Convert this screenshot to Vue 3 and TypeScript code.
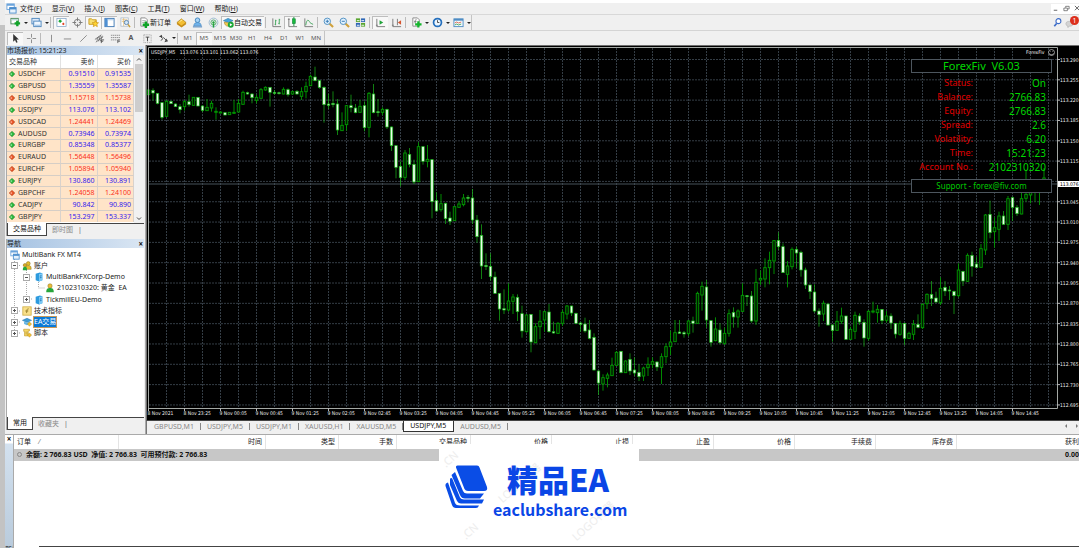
<script setup lang="ts">
type Candle = [high: number, top: number, bottom: number, low: number, falling: 0 | 1]

interface Tool {
  icon?: string
  label: string
  text?: string
  pressed?: boolean
  caret?: boolean
  sep?: boolean
}

const icons: Record<string, string> = {
  app: '<rect x="1" y="1" width="8" height="6" fill="#fff" stroke="#6ba4dc"/><rect x="1" y="1" width="8" height="2" fill="#6ba4dc"/><rect x="4" y="5" width="7" height="6" fill="#e6f2fc" stroke="#4a8ccc"/><rect x="4" y="5" width="7" height="2" fill="#4a8ccc"/>',
  newChart: '<rect x="1" y="1.5" width="8" height="6" fill="#fff" stroke="#4b8a5a"/><path d="M2 3h6" stroke="#9cc"/><path d="M5 7h6M8 4v6" stroke="#10a428" stroke-width="2.6"/>',
  profiles: '<rect x="1" y="1.5" width="8" height="6" fill="#dceafa" stroke="#4d86bd"/><rect x="3" y="4.500" width="8" height="6" fill="#eef6ff" stroke="#4d86bd"/><path d="M4 9h6" stroke="#8ab4dc"/>',
  market: '<rect x="1" y="1.500" width="10" height="9" fill="#fff" stroke="#7fa3c6" stroke-width=".8"/><path d="M3 4.500l1.500-1.500L6 4.500 4.500 6z" fill="#12a32c" stroke="#12a32c"/><path d="M6.500 7.500L8 6l1.500 1.500L8 9z" fill="#e04020"/>',
  target: '<circle cx="6" cy="6" r="3.500" fill="none" stroke="#777"/><path d="M6 0.500v4M6 7.500v4M0.500 6h4M7.500 6h4" stroke="#777"/>',
  navigator: '<path d="M1 2h3l1 1h4v5H1z" fill="#f8df70" stroke="#c99b22"/><path d="M8 4l1 2 2.500.3-1.800 1.700.5 2.500L8 9.300 5.800 10.500l.5-2.500-1.800-1.700L7 6z" fill="#ffd330" stroke="#c99115" stroke-width=".7"/>',
  terminal: '<rect x="1" y="1.500" width="10" height="9" fill="#fff" stroke="#3f78b4"/><rect x="1" y="1.500" width="3" height="9" fill="#4e8fd2"/><path d="M4 3h7" stroke="#9cc3e8"/>',
  tester: '<rect x="1" y="1" width="8" height="9" fill="#fff" stroke="#a3b4c6" stroke-width=".8"/><path d="M2 3h6M2 5h6M4 1v9" stroke="#e0b060" stroke-width=".7"/><circle cx="7" cy="6" r="2.300" fill="#cfe6fa" stroke="#5c82a8"/><path d="M8.700 8l2.300 3" stroke="#c69c36" stroke-width="1.500"/>',
  order: '<path d="M2 1h5l2 2v7H2z" fill="#fff" stroke="#888"/><path d="M3.500 4h4M3.500 6h3" stroke="#888" stroke-width=".7"/><path d="M4 8.500h7M7.500 5v7" stroke="#10a428" stroke-width="2.600"/>',
  editor: '<path d="M1 6l5-4 5 4-5 4z" fill="#f3bf35" stroke="#a77a12" stroke-width=".7"/><path d="M1 6v2l5 3.500L11 8V6L6 9.500z" fill="#c98e17"/><path d="M4 5l3-2" stroke="#fff0a0"/>',
  community: '<circle cx="6" cy="3.500" r="2.500" fill="#a5d3f6" stroke="#3e83bd"/><path d="M2 10c0-3 1.500-4 4-4s4 1 4 4z" fill="#6fb2ea" stroke="#3e83bd" stroke-width=".7"/><path d="M1 10.500h10" stroke="#7da5ce" stroke-width="2"/>',
  signals: '<circle cx="6" cy="6" r="4.800" fill="none" stroke="#9bb9d0"/><circle cx="6" cy="6" r="2.800" fill="none" stroke="#4caa66"/><circle cx="6" cy="6" r="1.300" fill="#22a43b"/><path d="M6 7v4.500" stroke="#22a43b" stroke-width="1.500"/>',
  auto: '<path d="M0.500 4L5.500 1.500 11 4 6 6z" fill="#45a4db" stroke="#2778ac" stroke-width=".7"/><path d="M1.500 5.500c0 6 8 6 8 0l-3.500 1z" fill="#f1cb53" stroke="#a8862d" stroke-width=".7"/><circle cx="8.500" cy="8.500" r="3.200" fill="#18a534"/><path d="M7.500 6.800v3.400L10.300 8.500z" fill="#fff"/>',
  bars: '<path d="M2 1.500v9h9" fill="none" stroke="#777"/><path d="M5 3v6M4 8h1M5 4h1M9 2v6M8 7h1M9 3h1" stroke="#3fa45a"/>',
  candles: '<path d="M2 1.500v9h9M1 2.500h2" fill="none" stroke="#777"/><path d="M7.500 0v10" stroke="#14963a"/><rect x="6" y="2" width="3" height="5" fill="#17bd3c" stroke="#14853a" stroke-width=".7"/>',
  line: '<path d="M2 1.500v9h9" fill="none" stroke="#777"/><path d="M3 9c1-7 3-6 4-4s2 2 4 3" fill="none" stroke="#3fa45a"/>',
  zoomIn: '<path d="M7 7l4 4" stroke="#d0a13a" stroke-width="2.200"/><circle cx="4.700" cy="4.700" r="3.500" fill="#dff0fd" stroke="#4d8dc0"/><path d="M3 4.700h3.400M4.700 3v3.400" stroke="#3579b2"/>',
  zoomOut: '<path d="M7 7l4 4" stroke="#d0a13a" stroke-width="2.200"/><circle cx="4.700" cy="4.700" r="3.500" fill="#dff0fd" stroke="#4d8dc0"/><path d="M3 4.700h3.400" stroke="#3579b2"/>',
  tile: '<rect x="1" y="1.500" width="4.500" height="4" fill="#58a52f"/><rect x="6.500" y="1.500" width="4.500" height="4" fill="#2e67b6"/><rect x="1" y="6.500" width="4.500" height="4" fill="#2e67b6"/><rect x="6.500" y="6.500" width="4.500" height="4" fill="#58a52f"/><path d="M2 4h3M7 4h3M2 9h3M7 9h3" stroke="#fff"/>',
  scroll: '<path d="M2 2v8.500h9M1 9h2" fill="none" stroke="#777"/><path d="M5 3.500v5L9 6z" fill="#22a43b"/>',
  shift: '<path d="M2 2v8.500h9M1 9h2M7 2v7" fill="none" stroke="#777"/><path d="M11 3.500v5L7.500 6z" fill="#d6532c"/>',
  indicators: '<path d="M2 1h5l2 2v7H2z" fill="#fff" stroke="#888"/><path d="M6 3c-1.500-.5-1.500 1-1.500 4M3.500 5h2.500" fill="none" stroke="#777"/><path d="M4.500 8h7M8 4.500v7" stroke="#13b52c" stroke-width="2.400"/>',
  clock: '<circle cx="6" cy="6" r="4.300" fill="#eef7ff" stroke="#2670bd" stroke-width="1.900"/><path d="M6 3.500V6h2" fill="none" stroke="#444"/>',
  template: '<rect x="1" y="2" width="10" height="8.500" fill="#f3faff" stroke="#4e8cc4"/><rect x="1" y="2" width="10" height="2" fill="#4e8cc4"/><path d="M2 6.500l2-1 2 1 3-1" stroke="#d9664b" fill="none"/><path d="M2 8.700l2-1 2 1 3-1" stroke="#46a35b" fill="none"/>',
  cursor: '<path d="M3.500 1v8.500l2-2 1.300 3.200 1.500-.6L7 7h2.700z" fill="#333"/>',
  cross: '<path d="M6 1v4M6 7v4M1 6h4M7 6h4" stroke="#888"/>',
  vline: '<path d="M6 2v8" stroke="#888"/>',
  hline: '<path d="M2 6.500h8" stroke="#888"/>',
  trend: '<path d="M2.500 9.500l7-7" stroke="#888"/>',
  channel: '<path d="M1 7l7-5M2 10l8-6M3 8l2-4M5 9l2-6M7 9l2-6" stroke="#555" stroke-width=".8"/><path d="M8 11V7.500h3M8 9h2" stroke="#333" fill="none" stroke-width=".8"/>',
  fibo: '<path d="M1 2.500h10M1 5h10M1 7.500h7" stroke="#888" stroke-dasharray="1.500 .6"/><path d="M8.500 11V7.500H11M8.500 9H11" stroke="#444" fill="none" stroke-width=".8"/>',
  label: '<rect x="2" y="2" width="8" height="8.500" fill="none" stroke="#999" stroke-dasharray="1 1"/><path d="M4 4.500h4M6 4.500V9" stroke="#444"/>',
  arrows: '<path d="M1 4l3-2 1 3zM7 10l4-1-2-3z" fill="#444"/><path d="M3 4l2 2 1-1 3 3M3 8l2-1" stroke="#444" fill="none"/>',
  accounts: '<circle cx="7.500" cy="3" r="2.300" fill="#e5bd2f" stroke="#8f7016" stroke-width=".6"/><path d="M4 10c0-4 1-4.500 3.500-4.500S11 6 11 10z" fill="#e5bd2f" stroke="#8f7016" stroke-width=".6"/><circle cx="3.500" cy="5" r="2" fill="#d9aa25" stroke="#8f7016" stroke-width=".6"/><path d="M1 11c0-3 .5-4 2.500-4S6 8 6 11z" fill="#27a83c"/>',
  server: '<path d="M2 2l5-1.500 3 1V10L6 11.500 2 10z" fill="#2c9ade"/><path d="M6 2.500l4-1V10l-4 1.500z" fill="#7cc9f5"/><path d="M7 5l2-.5M7 7l2-.5" stroke="#1b6fae"/>',
  user: '<circle cx="6" cy="3.500" r="2.600" fill="#e9bd39" stroke="#8a7120" stroke-width=".6"/><path d="M1.500 11c0-4 1.500-5 4.500-5s4.500 1 4.500 5z" fill="#28a63c"/>',
  func: '<rect x="1" y="1" width="10" height="10" fill="#f9e08a" stroke="#cfae48"/><path d="M8 3.500c-2-.7-2 1-2.500 5M4 6h3.500" stroke="#8d741f" fill="none"/>',
  expert: '<path d="M0.500 4L6 1.500 11.500 4 6 6.500z" fill="#3d9cd6" stroke="#2473a8" stroke-width=".6"/><path d="M2.500 5.500v3L6 10l3.500-1.500v-3L6 7z" fill="#63b5e4"/><path d="M9 6l2.500 2.500L9 11 6.500 8.500z" fill="#f3c02f" stroke="#a87d12" stroke-width=".5"/>',
  script: '<path d="M2 1.500h7v2H7.500v6H3V4H2z" fill="#f6d766" stroke="#bd962a" stroke-width=".7"/><path d="M4 5h3M4 7h3" stroke="#a9872a" stroke-width=".7"/><path d="M9 6l2.500 2.500L9 11 6.500 8.500z" fill="#f3c02f" stroke="#a87d12" stroke-width=".5"/>',
  search: '<circle cx="7" cy="4.500" r="2.700" fill="#fff" stroke="#3d6cc8" stroke-width="1.200"/><path d="M5 7L2.500 10" stroke="#3d6cc8" stroke-width="1.800"/>',
  alert: '<path d="M1 7c0-3 8-3 8 0s-3 3-4 3l-2 1.500V10C2 9.500 1 9 1 7z" fill="#d4d4d4" stroke="#aaa" stroke-width=".6"/>',
}

const menus: [string, string][] = [['文件', 'F'], ['显示', 'V'], ['插入', 'I'], ['图表', 'C'], ['工具', 'T'], ['窗口', 'W'], ['帮助', 'H']]

const mainTools: Tool[] = [
  { icon: 'newChart', label: '新图表', caret: true },
  { icon: 'profiles', label: '配置', caret: true },
  { sep: true, label: '' },
  { icon: 'market', label: '市场报价', pressed: true },
  { icon: 'target', label: '数据窗口' },
  { icon: 'navigator', label: '导航', pressed: true },
  { icon: 'terminal', label: '终端', pressed: true },
  { icon: 'tester', label: '测试' },
  { sep: true, label: '' },
  { icon: 'order', label: '新订单', text: '新订单' },
  { icon: 'editor', label: '编辑器' },
  { icon: 'community', label: '社区' },
  { icon: 'signals', label: '信号' },
  { icon: 'auto', label: '自动交易', text: '自动交易', pressed: true },
  { sep: true, label: '' },
  { icon: 'bars', label: '柱状图' },
  { icon: 'candles', label: '阴阳烛', pressed: true },
  { icon: 'line', label: '折线图' },
  { sep: true, label: '' },
  { icon: 'zoomIn', label: '放大' },
  { icon: 'zoomOut', label: '缩小' },
  { icon: 'tile', label: '平铺' },
  { sep: true, label: '' },
  { icon: 'scroll', label: '自动滚动', pressed: true },
  { icon: 'shift', label: '图表平移' },
  { sep: true, label: '' },
  { icon: 'indicators', label: '指标', caret: true },
  { icon: 'clock', label: '周期', caret: true },
  { icon: 'template', label: '模板', caret: true },
]

const drawTools: Tool[] = [
  { icon: 'cursor', label: '光标', pressed: true },
  { icon: 'cross', label: '十字线' },
  { sep: true, label: '' },
  { icon: 'vline', label: '垂直线' },
  { icon: 'hline', label: '水平线' },
  { icon: 'trend', label: '趋势线' },
  { icon: 'channel', label: '通道' },
  { icon: 'fibo', label: '斐波那契' },
  { label: '文字', text: 'A' },
  { icon: 'label', label: '文字标签' },
  { icon: 'arrows', label: '箭头', caret: true },
]
const frames = ['M1', 'M5', 'M15', 'M30', 'H1', 'H4', 'D1', 'W1', 'MN']

const quotes: [string, string, string, boolean][] = [
  ['USDCHF', '0.91510', '0.91535', true],
  ['GBPUSD', '1.35559', '1.35587', true],
  ['EURUSD', '1.15718', '1.15738', false],
  ['USDJPY', '113.076', '113.102', true],
  ['USDCAD', '1.24441', '1.24469', false],
  ['AUDUSD', '0.73946', '0.73974', true],
  ['EURGBP', '0.85348', '0.85377', true],
  ['EURAUD', '1.56448', '1.56496', false],
  ['EURCHF', '1.05894', '1.05940', false],
  ['EURJPY', '130.860', '130.891', true],
  ['GBPCHF', '1.24058', '1.24100', false],
  ['CADJPY', '90.842', '90.890', true],
  ['GBPJPY', '153.297', '153.337', true],
]

const tree: { level: number; icon: string; text: string; mark?: string; selected?: boolean }[] = [
  { level: 0, icon: 'app', text: 'MultiBank FX MT4' },
  { level: 1, icon: 'accounts', text: '账户', mark: '−' },
  { level: 2, icon: 'server', text: 'MultiBankFXCorp-Demo', mark: '−' },
  { level: 3, icon: 'user', text: '2102310320: 黄金\u00a0 EA' },
  { level: 2, icon: 'server', text: 'TickmillEU-Demo', mark: '+' },
  { level: 1, icon: 'func', text: '技术指标', mark: '+' },
  { level: 1, icon: 'expert', text: 'EA交易', mark: '+', selected: true },
  { level: 1, icon: 'script', text: '脚本', mark: '+' },
]

const chartTabs = ['GBPUSD,M1', 'USDJPY,M5', 'USDJPY,M1', 'XAUUSD,H1', 'XAUUSD,M5', 'USDJPY,M5', 'AUDUSD,M5']
const activeChart = 5

const info: [string, string][] = [
  ['Status:', 'On'],
  ['Balance:', '2766.83'],
  ['Equity:', '2766.83'],
  ['Spread:', '2.6'],
  ['Volatility:', '6.20'],
  ['Time:', '15:21:23'],
  ['Account No.:', '2102310320'],
]

const orderColumns = ['时间', '类型', '手数', '交易品种', '价格', '止损', '止盈', '价格', '手续费', '库存费', '获利']

// Candle extents in thirds of a chart unit, measured down from the origin of each run.
const nightRun: Candle[] = [
  [135, 138, 152, 155, 0], [133, 139, 147, 170, 1], [148, 148, 178, 181, 1], [176, 176, 220, 227, 1], [168, 172, 217, 218, 0],
  [170, 172, 179, 180, 1], [178, 180, 188, 189, 1], [180, 188, 197, 208, 1], [168, 173, 188, 200, 0], [152, 173, 182, 188, 1],
  [160, 160, 184, 185, 0], [160, 160, 186, 187, 1], [184, 186, 199, 204, 1], [165, 190, 200, 201, 0], [170, 178, 192, 203, 0],
  [190, 202, 205, 227, 0], [203, 204, 206, 208, 0], [205, 206, 213, 214, 1], [204, 205, 212, 213, 0], [168, 205, 208, 210, 0],
  [165, 178, 204, 205, 0], [140, 145, 181, 182, 0], [143, 146, 150, 152, 1], [148, 150, 161, 178, 1], [152, 160, 169, 178, 0],
  [132, 137, 163, 164, 0], [127, 130, 138, 140, 0], [130, 130, 145, 188, 1], [138, 145, 148, 152, 1], [143, 146, 149, 152, 1],
  [130, 136, 150, 151, 0], [133, 137, 152, 158, 1], [140, 143, 150, 152, 0], [138, 142, 150, 152, 1], [130, 143, 157, 168, 0],
  [113, 127, 143, 163, 0], [92, 97, 125, 126, 0], [68, 99, 110, 112, 1], [107, 110, 130, 134, 1], [127, 130, 182, 236, 1],
  [150, 180, 184, 195, 1], [142, 178, 182, 190, 1], [165, 180, 258, 273, 1], [205, 244, 260, 261, 0], [183, 185, 242, 260, 0],
  [152, 185, 191, 205, 1], [180, 192, 206, 208, 1], [168, 187, 205, 207, 0], [172, 185, 251, 262, 1], [144, 148, 250, 280, 0],
  [120, 150, 206, 208, 1], [165, 203, 206, 218, 1], [190, 196, 205, 213, 0], [194, 196, 249, 255, 1], [247, 249, 305, 321, 1],
  [303, 305, 370, 403, 1], [352, 367, 401, 427, 1], [318, 327, 400, 408, 0], [312, 331, 361, 370, 1], [347, 361, 414, 420, 1],
  [295, 308, 413, 414, 0], [306, 308, 352, 362, 1], [303, 346, 352, 370, 0], [345, 347, 473, 523, 1], [445, 470, 501, 503, 1],
  [450, 479, 497, 503, 0], [476, 478, 524, 540, 1], [503, 522, 532, 543, 1], [486, 488, 530, 531, 0], [472, 480, 490, 491, 0],
  [450, 462, 482, 487, 0], [453, 460, 463, 475, 1], [435, 462, 528, 540, 1],
]
const dayRun: Candle[] = [
  [105, 120, 170, 188, 1], [133, 166, 258, 297, 1], [220, 256, 260, 270, 1], [220, 259, 290, 302, 1], [275, 291, 340, 341, 1],
  [340, 340, 387, 422, 1], [328, 386, 390, 402, 1], [310, 363, 390, 395, 0], [342, 351, 364, 402, 0], [343, 352, 395, 423, 1],
  [377, 401, 453, 473, 1], [402, 405, 455, 458, 0], [402, 403, 486, 517, 1], [430, 440, 488, 490, 0], [390, 424, 440, 477, 0],
  [392, 395, 420, 455, 0], [372, 396, 455, 458, 1], [425, 455, 459, 461, 1], [426, 430, 460, 462, 0], [390, 397, 430, 438, 0],
  [375, 378, 402, 418, 0], [377, 378, 399, 408, 1], [398, 400, 430, 432, 1], [426, 429, 433, 455, 1], [413, 432, 453, 458, 1],
  [420, 450, 475, 478, 1], [460, 472, 570, 572, 1], [572, 573, 609, 645, 1], [583, 593, 612, 632, 0], [578, 585, 595, 622, 0],
  [533, 556, 587, 588, 0], [513, 517, 556, 557, 0], [513, 514, 578, 580, 1], [541, 543, 578, 579, 0], [520, 538, 573, 585, 1],
  [532, 570, 579, 588, 1], [553, 577, 590, 603, 1], [560, 564, 588, 603, 0], [532, 553, 563, 588, 0], [532, 545, 553, 565, 0],
  [543, 546, 561, 573, 1], [520, 530, 562, 612, 0], [490, 500, 530, 550, 0], [452, 486, 500, 525, 0], [420, 458, 485, 486, 0],
  [420, 456, 460, 462, 1], [453, 458, 462, 473, 1], [420, 423, 461, 468, 0], [410, 423, 430, 458, 1], [335, 340, 430, 432, 0],
  [305, 319, 345, 392, 0], [300, 321, 420, 443, 1], [420, 422, 487, 500, 1], [412, 447, 482, 484, 0], [430, 450, 488, 493, 1],
  [443, 460, 490, 495, 0], [388, 401, 460, 470, 0], [382, 397, 411, 443, 1], [388, 393, 411, 443, 0], [310, 346, 394, 396, 0],
  [345, 347, 350, 378, 1], [333, 348, 423, 428, 1], [267, 307, 423, 435, 0], [272, 295, 300, 315, 0], [235, 263, 297, 322, 0],
  [215, 241, 263, 313, 0], [180, 182, 243, 282, 0], [157, 181, 200, 210, 1], [190, 200, 278, 279, 1], [243, 258, 283, 322, 0],
  [202, 208, 260, 268, 0], [200, 208, 219, 263, 1], [212, 217, 270, 290, 1], [263, 270, 315, 327, 1], [314, 315, 335, 357, 1],
  [313, 336, 393, 398, 1], [385, 393, 404, 440, 1], [362, 370, 402, 423, 0], [371, 372, 435, 437, 1], [433, 435, 452, 485, 1],
  [393, 424, 451, 452, 0], [383, 408, 424, 432, 0], [407, 408, 478, 480, 1], [440, 448, 478, 479, 0], [395, 406, 454, 477, 0],
  [400, 408, 426, 435, 1], [418, 427, 474, 500, 1], [390, 394, 475, 482, 0], [365, 393, 396, 400, 0], [375, 388, 398, 428, 0],
  [387, 388, 422, 432, 1], [393, 408, 421, 428, 0], [400, 408, 429, 447, 1], [429, 430, 462, 475, 1], [422, 431, 463, 467, 0],
  [429, 430, 475, 495, 1], [455, 460, 475, 477, 0], [420, 433, 463, 480, 0], [403, 433, 442, 445, 1], [370, 373, 443, 447, 0],
  [340, 343, 371, 387, 0], [303, 343, 356, 378, 1], [335, 354, 366, 368, 1], [292, 325, 368, 375, 0], [303, 322, 333, 348, 1],
  [318, 330, 333, 360, 1], [332, 334, 347, 402, 1], [250, 270, 347, 352, 0], [272, 274, 303, 318, 1], [220, 226, 304, 306, 0],
  [215, 226, 259, 290, 1], [230, 252, 262, 263, 1], [192, 206, 262, 263, 0], [102, 105, 210, 225, 0], [62, 103, 158, 175, 1],
  [112, 143, 155, 203, 0], [95, 108, 148, 183, 0], [93, 108, 133, 135, 1], [48, 56, 133, 150, 0], [50, 53, 82, 123, 1],
  [75, 82, 101, 108, 1], [35, 56, 102, 103, 0], [-30, 43, 55, 65, 0], [20, 30, 45, 70, 0], [5, 20, 35, 65, 0],
  [0, 10, 25, 75, 0], [-36, -6, 12, 18, 0],
]

const firstX = 148.5
const step = 4.5
const candles = [
  ...nightRun.map((c) => ({ c, base: 44 })),
  ...dayRun.map((c) => ({ c, base: 180 })),
].map(({ c, base }, i) => ({
  x: firstX + i * step,
  high: base + c[0] / 3,
  top: base + c[1] / 3,
  size: Math.max(1, (c[2] - c[1]) / 3),
  low: base + c[3] / 3,
  falling: c[4] === 1,
}))

const gridX = Array.from({ length: 50 }, (_, i) => 166.5 + i * 18)
const currentY = 184
const prices = Array.from({ length: 18 }, (_, i) => ({
  y: 59.5 + i * 20.32,
  text: (113.29 - i * 0.035).toFixed(3),
}))
// The current price tag takes the place of any scale label it would cover.
const priceLabels = prices.filter((p) => Math.abs(p.y - currentY) > 5)
const times = Array.from({ length: 25 }, (_, i) => {
  const minutes = (22 * 60 + 45 + i * 40) % 1440
  const hh = String(Math.floor(minutes / 60)).padStart(2, '0')
  const mm = String(minutes % 60).padStart(2, '0')
  return {
    x: 148.5 + i * 36,
    text: i === 0 ? '8 Nov 2021' : `${i === 1 ? 8 : 9} Nov ${hh}:${mm}`,
  }
})
</script>

<template>
  <div class="window">
    <header>
      <nav class="menubar">
        <svg class="icon" viewBox="0 0 12 12" v-html="icons.app" />
        <button v-for="m in menus" :key="m[0]">{{ m[0] }}(<u>{{ m[1] }}</u>)</button>
        <div class="controls">
          <button aria-label="最小化"><svg viewBox="0 0 8 8"><path d="M2 6h4" stroke="#555" /></svg></button>
          <button aria-label="还原"><svg viewBox="0 0 8 8"><path d="M3 3V1.500h4v3H5.500M1 3.500h4v3H1z" fill="none" stroke="#555" stroke-width=".8" /></svg></button>
          <button aria-label="关闭"><svg viewBox="0 0 8 8"><path d="M1 1l5 5M6 1L1 6" stroke="#555" /></svg></button>
        </div>
      </nav>
      <div class="toolbar">
        <div class="band">
          <template v-for="(t, i) in mainTools" :key="i">
            <span v-if="t.sep" class="sep" />
            <button v-else class="tool" :class="{ pressed: t.pressed, wide: t.text }" :aria-label="t.label">
              <svg v-if="t.icon" class="icon" viewBox="0 0 12 12" v-html="icons[t.icon]" />
              <span v-if="t.text">{{ t.text }}</span>
            </button>
            <button v-if="t.caret" class="caret" :aria-label="t.label + '选项'" />
          </template>
        </div>
        <div class="status">
          <button class="tool" aria-label="搜索"><svg class="icon" viewBox="0 0 12 12" v-html="icons.search" /></button>
          <button class="tool alert" aria-label="通知">
            <svg class="icon" viewBox="0 0 12 12" v-html="icons.alert" /><span class="badge">1</span>
          </button>
        </div>
      </div>
      <div class="toolbar second">
        <div class="band">
          <template v-for="(t, i) in drawTools" :key="i">
            <span v-if="t.sep" class="sep" />
            <button v-else class="tool" :class="{ pressed: t.pressed }" :aria-label="t.label">
              <svg v-if="t.icon" class="icon" viewBox="0 0 12 12" v-html="icons[t.icon]" />
              <b v-else>{{ t.text }}</b>
            </button>
            <button v-if="t.caret" class="caret" :aria-label="t.label + '选项'" />
          </template>
          <span class="sep" />
          <button v-for="f in frames" :key="f" class="tool frame" :class="{ pressed: f === 'M5' }">{{ f }}</button>
        </div>
      </div>
    </header>

    <main>
      <aside>
        <section class="panel">
          <h2>市场报价: 15:21:23<button aria-label="关闭市场报价">×</button></h2>
          <div class="market">
            <table>
              <thead>
                <tr><th class="sym">交易品种</th><th>卖价</th><th>买价</th></tr>
              </thead>
              <tbody>
                <tr v-for="q in quotes" :key="q[0]" :class="q[3] ? 'up' : 'down'">
                  <td class="sym">
                    <svg class="mark" viewBox="0 0 8 8"><path d="M4 0.500L7.500 4 4 7.500 0.500 4z" stroke-width="1" /><path d="M3 2.500L4.500 4 3 5.500 1.500 4z" class="shine" /></svg>{{ q[0] }}
                  </td>
                  <td>{{ q[1] }}</td>
                  <td>{{ q[2] }}</td>
                </tr>
              </tbody>
            </table>
            <div class="scrollbar">
              <svg viewBox="0 0 8 8"><path d="M2 5l2-2 2 2" fill="none" stroke="#444" /></svg>
              <span class="thumb" />
              <svg viewBox="0 0 8 8"><path d="M2 3l2 2 2-2" fill="none" stroke="#444" /></svg>
            </div>
          </div>
          <div class="tabs"><button class="active">交易品种</button><button>即时图</button></div>
        </section>
        <section class="panel grow">
          <h2>导航<button aria-label="关闭导航">×</button></h2>
          <div class="navigator">
            <svg class="branches" viewBox="0 0 60 90"><path d="M7.500 10V84M8 16.500h6M8 62h6M8 73h6M8 84h6M19.500 21V50M20 28h6M20 50h6M31.500 33V39H38" /></svg>
            <ul>
              <li v-for="n in tree" :key="n.text" :class="'level' + n.level">
                <span v-if="n.mark" class="expander"><svg viewBox="0 0 5 5"><path d="M1 2.500h3" /><path v-if="n.mark === '+'" d="M2.500 1v3" /></svg></span>
                <svg class="icon" viewBox="0 0 12 12" v-html="icons[n.icon]" />
                <span class="name" :class="{ selected: n.selected }">{{ n.text }}</span>
              </li>
            </ul>
          </div>
          <div class="tabs"><button class="active">常用</button><button>收藏夹</button></div>
        </section>
      </aside>

      <section class="workspace">
        <div class="chart">
          <svg class="plot" viewBox="146 45 933 375">
            <rect x="146" y="45" width="933" height="375" fill="#000" />
            <path d="M146.500 420V45.500H1079" fill="none" stroke="#6e6e6e" />
            <g class="grid">
              <path v-for="x in gridX" :key="x" :d="`M${x} 48V408`" />
              <path v-for="p in prices" :key="p.text" :d="`M149 ${p.y}H1057`" />
            </g>
            <path :d="`M149 ${currentY}H1057`" stroke="#46525a" />
            <g v-for="c in candles" :key="c.x" :class="c.falling ? 'falling' : 'rising'">
              <path :d="`M${c.x} ${c.high}V${c.low}`" />
              <rect :x="c.x - 1.25" :y="c.top" width="2.5" :height="c.size" />
            </g>
            <path d="M148.500 408V47.500H1057.500V408.500H148" fill="none" stroke="#a4a8a4" />
            <g class="axis">
              <path v-for="p in prices" :key="p.text" :d="`M1057 ${p.y}h3`" />
              <path v-for="t in times" :key="t.x" :d="`M${t.x} 408v3`" />
              <text v-for="p in priceLabels" :key="p.text" x="1060" :y="p.y + 2">{{ p.text }}</text>
              <text v-for="t in times" :key="t.x" :x="t.x - 1" y="415">{{ t.text }}</text>
              <text x="151" y="54">USDJPY,M5&#160;&#160; 113.076 113.101 113.062 113.076</text>
              <text x="1026" y="54">ForexFiv</text>
              <rect x="1058" y="181" width="21" height="6" fill="#fff" />
              <text x="1060" y="186" class="current">113.076</text>
            </g>
            <g fill="none" stroke="#ccc" stroke-width=".7"><circle cx="1051.500" cy="52.500" r="3" /><path d="M1050 51.500h.5M1052.500 51.500h.5M1049.500 53.500c1 1.500 3 1.500 4 0" /></g>
          </svg>
          <div class="info">
            <div class="title">ForexFiv&#160; V6.03</div>
            <dl>
              <template v-for="r in info" :key="r[0]"><dt>{{ r[0] }}</dt><dd>{{ r[1] }}</dd></template>
            </dl>
            <div class="support">Support - forex@fiv.com</div>
          </div>
        </div>
        <div class="chart-tabs">
          <button v-for="(t, i) in chartTabs" :key="i" :class="{ active: i === activeChart }">{{ t }}</button>
          <svg class="pager" viewBox="0 0 16 8"><path d="M4 2v4L2 4zM13 2v4l2-2z" fill="#777" /></svg>
        </div>
      </section>
    </main>

    <section class="terminal">
      <div class="spine"><button aria-label="关闭终端">×</button><span>新闻</span></div>
      <div class="orders">
        <table>
          <colgroup>
            <col class="c-order"><col class="c-time"><col class="c-type"><col class="c-lots"><col class="c-symbol">
            <col class="c-price"><col class="c-price"><col class="c-price"><col class="c-price"><col class="c-price"><col class="c-price"><col>
          </colgroup>
          <thead>
            <tr><th class="first">订单<i>/</i></th><th v-for="(c, i) in orderColumns" :key="i">{{ c }}</th></tr>
          </thead>
          <tbody>
            <tr>
              <td colspan="11" class="first"><span class="dot" />余额: 2 766.83 USD&#160; 净值: 2 766.83&#160; 可用预付款: 2 766.83</td>
              <td>0.00</td>
            </tr>
          </tbody>
        </table>
      </div>
      <div class="brand">
        <span class="ghost g1">.CN</span><span class="ghost g2">LOGO神器</span><span class="ghost g3">.CN</span><span class="ghost g4">LOGO神器</span>
        <svg class="logo" viewBox="0 0 43 44" aria-hidden="true">
          <g fill="#0a4de6">
            <path d="M11 2.500Q10.500 0.500 12.500 0.500H32Q34 0.500 34.500 2.500L42 22Q43 26 39 26H23Q20.500 26 19.500 24z" />
            <path d="M10 7L6.500 10 15 30Q16.500 33.500 20 33.500H35L39 28.500H22Q19 28.500 18 26z" />
            <path d="M4.500 12L1.500 15 11 36Q12.500 39 16 39H31L34 35.500H18Q15 35.500 14 33z" opacity="0" />
            <path d="M5 13.500L5 20 12 36Q13.500 38.500 16 38.500H37L39 34.500H19Q16 34.500 15 32.500L7 13z" />
            <path d="M3 17.500Q0 18 0.500 21L7 40Q8 43 11 43H31Q33 43 34 40.500H15Q11 40.500 10 38z" />
          </g>
        </svg>
        <div class="words"><strong>精品EA</strong><span>eaclubshare.com</span></div>
      </div>
    </section>
  </div>
</template>

<style>
body { margin: 0; background: #fff; }
</style>

<style scoped>
* { box-sizing: border-box; }
.window {
  display: flex; flex-direction: column; height: 100vh; min-height: 548px; overflow: hidden;
  padding-left: 5px; background: linear-gradient(#ececec 25px, #c3c3c3 25px);
  font: 7px/10px "Noto Sans", "Noto Sans CJK SC", sans-serif; color: #222;
}
button { font: inherit; color: inherit; border: 0; background: none; padding: 0; margin: 0; }
.icon { width: 11px; height: 11px; flex: none; display: block; }
header { background: #f0f0f0; border-top: 3px solid #fff; }
.menubar { display: flex; align-items: center; height: 12px; padding-left: 1px; gap: 10px; border-bottom: 1px solid #d8d8d8; }
.menubar > .icon { margin-right: -7px; }
.controls { margin-left: auto; display: flex; gap: 3px; background: #fff; height: 10px; padding-left: 1px; margin-right: -3px; }
.controls button { width: 8px; }
.controls svg { width: 7px; height: 7px; display: block; }
.toolbar { display: flex; height: 16px; border-bottom: 1px solid #d4d4d4; }
.toolbar.second { height: 14px; border-bottom: 0; }
.band { display: flex; align-items: center; padding-left: 2px; border-right: 1px solid #c4c4c4; }
.tool { width: 16px; height: 13px; display: flex; align-items: center; justify-content: center; color: #555; }
.tool.wide { width: auto; padding: 0 2px; color: #111; }
.tool.pressed { background: #f8f8f8; box-shadow: inset 1px 1px #bdbdbd; }
.frame { font-size: 6px; }
.caret { width: 5px; height: 13px; display: flex; align-items: center; justify-content: center; }
.caret::before { content: ""; border: 2px solid transparent; border-top-color: #222; border-bottom: 0; }
.sep { width: 3px; height: 11px; border-left: 1px solid #bbb; margin-left: 1px; }
.status { margin-left: auto; display: flex; align-items: center; }
.alert { width: 14px; position: relative; justify-content: flex-start; }
.badge { position: absolute; right: 0; top: 0; width: 9px; height: 9px; border-radius: 5px; background: #dc2f1c; color: #fff; line-height: 9px; }
main { display: grid; grid-template-columns: 141px 1fr; background: #f0f0f0; }
aside { display: flex; flex-direction: column; padding: 1px 1px 4px 1px; gap: 3px; border-right: 1px solid #aaa; }
.panel { display: flex; flex-direction: column; border-left: 1px solid #aaa; }
.grow { flex: 1; }
h2 {
  display: flex; justify-content: space-between; align-items: center; height: 9px; margin: 0;
  font-size: 7px; line-height: 9px; font-weight: 400; background: linear-gradient(90deg, #a5c2e2, #dae6f3);
}
h2 button, .spine button { font-size: 8px; line-height: 8px; font-weight: 700; color: #111; padding: 0 1px; }
.market { display: flex; background: #fff; height: 168px; }
.market table { flex: 1; height: 167px; border-collapse: separate; border-spacing: 0; table-layout: fixed; }
.market th { height: 13px; padding: 0 2px; font-weight: 400; text-align: right; border-right: 1px solid #e2e2e2; }
.market td { padding: 0 2px; text-align: right; background: #ffe4c8; border-top: 1px solid #d6cec6; border-right: 1px solid #d9d2cc; color: #3220ee; line-height: 10px; }
.market .down td { color: #fa3020; }
.market .sym, .market .down .sym { width: 54px; text-align: left; color: #333; white-space: nowrap; }
.mark { width: 6px; height: 6px; margin-right: 3px; vertical-align: -1px; fill: #24bd3a; stroke: #168525; }
.down .mark { fill: #ef5323; stroke: #b23813; }
.mark .shine { fill: #fff; stroke: none; opacity: .5; }
.scrollbar { width: 10px; display: flex; flex-direction: column; align-items: center; background: #f1f1f1; }
.scrollbar svg { width: 8px; height: 9px; }
.thumb { width: 8px; height: 48px; background: #cdcdcd; margin-bottom: auto; }
.tabs { display: flex; height: 13px; border-top: 1px solid #444; }
.tabs button { padding: 0 5px; color: #888; height: 11px; }
.tabs .active { background: #fff; color: #111; height: 13px; margin-top: -1px; border: solid #444; border-width: 0 1px 1px; }
.tabs button:last-child::after { content: "|"; color: #666; margin-left: 5px; }
.navigator { flex: 1; background: #fff; position: relative; padding-top: 1px; }
.branches { position: absolute; left: 0; top: 1px; width: 60px; height: 90px; fill: none; stroke: #aaa; stroke-dasharray: 1 1; }
ul { position: relative; list-style: none; margin: 0; padding: 0; display: grid; grid-template-rows: repeat(8, 1fr); height: 90px; }
li { display: flex; align-items: center; white-space: nowrap; }
li .icon { width: 10px; height: 10px; margin: 0 2px; }
.level0 { padding-left: 1px; }
.level1 { padding-left: 5px; }
.level2 { padding-left: 17px; }
.level3 { padding-left: 36px; }
.expander { width: 5px; height: 5px; background: #fff; outline: 1px solid #aaa; margin-right: 3px; }
.expander svg { display: block; width: 5px; height: 5px; stroke: #555; }
.selected { background: #0a78d6; color: #fff; outline: 1px solid #c79a5c; }
.workspace { min-width: 0; display: flex; flex-direction: column; }
.chart { position: relative; background: #000; }
.plot { display: block; width: 100%; height: auto; }
.grid path { stroke: #4b5763; stroke-dasharray: 2 1; stroke-width: .7; fill: none; }
.rising { stroke: #009a00; fill: #001a00; stroke-width: .9; }
.falling { stroke: #18b818; fill: #eaffea; stroke-width: .7; }
.axis path { stroke: #b8b8b8; }
.axis text { font: 5px "DejaVu Sans Condensed", "DejaVu Sans", sans-serif; fill: #eee; }
.axis .current { fill: #000; }
.info { position: absolute; right: 27px; top: 14px; width: 141px; color: #00d800; }
.title, .support { height: 14px; border: 1px solid #4d565e; background: #000; text-align: center; }
.title { font-size: 11px; line-height: 12px; }
.support { font-size: 8px; line-height: 12px; color: #00c800; }
dl { display: grid; grid-template-columns: 62px 1fr; margin: 3px 6px 5px 0; line-height: 14px; text-align: right; }
dt { font-size: 9px; color: #e00000; white-space: nowrap; }
dd { font-size: 10px; margin: 0; }
.chart-tabs { display: flex; height: 14px; border-top: 1px solid #444; border-left: 1px solid #777; color: #888; padding-left: 1px; }
.chart-tabs button { height: 11px; padding: 0 7px 0 6px; position: relative; }
.chart-tabs button:not(.active)::after { content: ""; position: absolute; right: 0; top: 2px; height: 7px; border-right: 1px solid #888; }
.chart-tabs .active { background: #fff; color: #111; border: 1px solid #333; border-top: 0; }
.pager { margin-left: auto; width: 16px; height: 8px; margin-top: 1px; }
.terminal { flex: 1; position: relative; display: flex; background: #fff; border-top: 1px solid #aaa; }
.spine { width: 9px; display: flex; flex-direction: column; justify-content: space-between; overflow: hidden; background: linear-gradient(#fff 8px, #d3e1ef 9px, #b9cbdc); border-right: 1px solid #aaa; }
.spine span { height: 3px; overflow: hidden; white-space: nowrap; }
.orders { flex: 1; min-width: 0; }
.orders::after { content: ""; position: absolute; left: 34px; right: 0; bottom: 1px; border-top: 1px solid #444; }
.orders table { width: 100%; table-layout: fixed; border-spacing: 0; border-collapse: separate; }
.orders th { height: 14px; padding: 0 3px 0 0; font-weight: 400; text-align: right; border-right: 1px solid #e4e4e4; }
.orders th:last-child, .orders td:last-child { padding-right: 0; border-right: 0; }
.orders td { height: 12px; padding: 0; background: #c7c7c7; font-weight: 700; text-align: right; color: #111; }
.orders .first { text-align: left; padding-left: 3px; }
.orders i { margin-left: 7px; color: #888; }
.dot { display: inline-block; width: 5px; height: 5px; border: 1px solid #888; border-radius: 50%; margin-right: 4px; }
.c-order { width: 105px; }
.c-time { width: 147px; }
.c-type { width: 73px; }
.c-lots { width: 58px; }
.c-symbol { width: 74px; }
.c-price { width: 81px; }
.brand { position: absolute; left: 434px; top: 9px; bottom: 3px; width: 200px; background: #fff; overflow: hidden; display: flex; padding: 16px 0 0 6px; gap: 5px; color: #0a46e6; }
.logo { position: relative; width: 43px; height: 44px; margin-top: 5px; flex: none; }
.words { position: relative; font-family: "Noto Sans CJK SC", sans-serif; font-weight: 700; }
.words strong { display: block; font-size: 31px; line-height: 38px; margin-left: 14px; }
.words span { display: block; font-size: 16px; line-height: 22px; }
.ghost { position: absolute; color: #ededed; font-size: 11px; transform: rotate(-42deg); }
.g1 { left: 2px; top: 10px; }
.g2 { left: 54px; top: 34px; }
.g3 { left: 22px; top: 82px; }
.g4 { left: 128px; top: 72px; }
</style>
